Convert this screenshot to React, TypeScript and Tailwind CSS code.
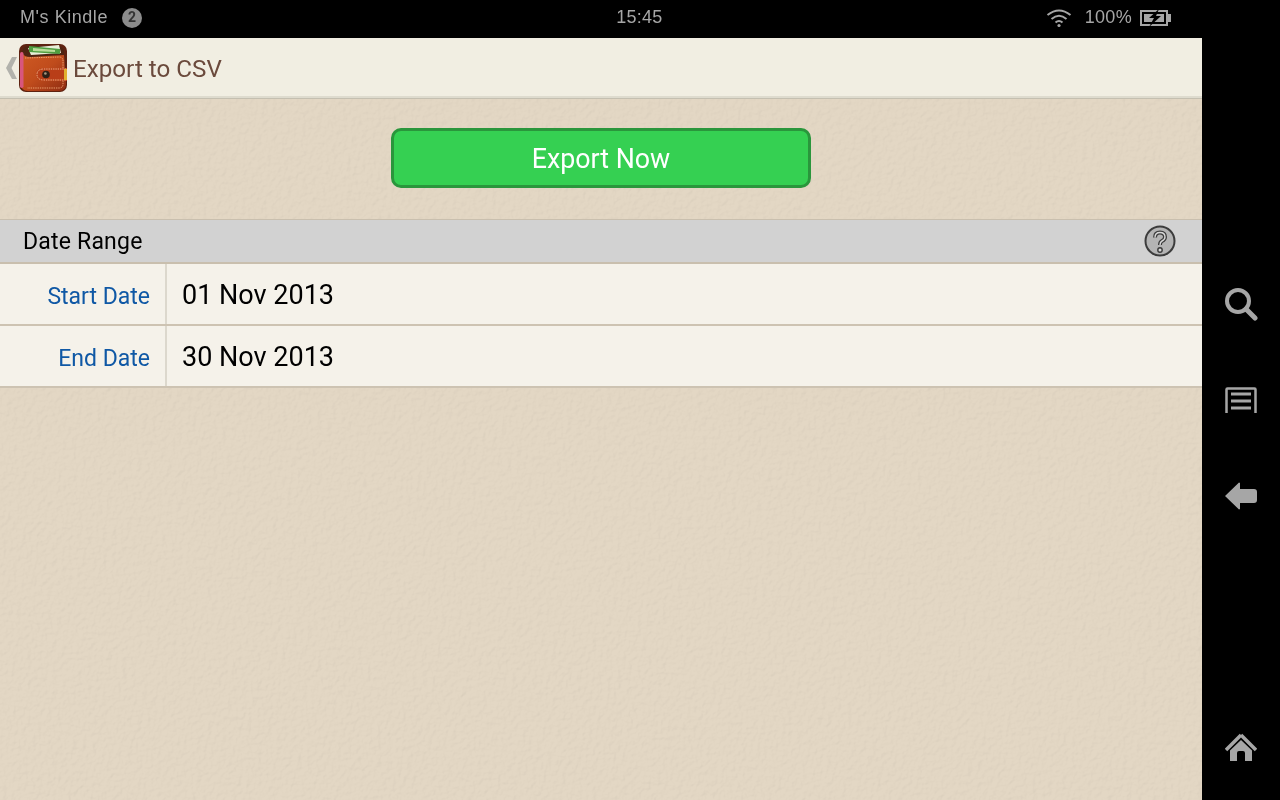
import React from "react";

function WalletIcon() {
  return (
    <svg width="48" height="48" viewBox="0 0 48 48" className="shrink-0">
      <defs>
        <linearGradient id="leather" x1="0" y1="0" x2="1" y2="1">
          <stop offset="0" stopColor="#cf5a24" />
          <stop offset="0.5" stopColor="#c04c1c" />
          <stop offset="1" stopColor="#8f2c12" />
        </linearGradient>
      </defs>
      <rect x="0" y="0" width="48" height="48" rx="7" fill="#5e2210" />
      <path d="M3 10 Q3 2 10 2 L38 2 Q45 2 45 9 L45 14 L3 14 Z" fill="#4e2412" />
      <path d="M9 4 L40 1 L42 9 L12 11 Z" fill="#e8efd8" />
      <path d="M10 2 L41 5 L41 10 L10 8 Z" fill="#4f9e40" />
      <path d="M14 4 L36 6 L36 8 L14 7 Z" fill="#b8dc98" />
      <path d="M3 8 Q4 13 12 13 L45 11 L47 40 Q47 47 40 47 L9 47 Q2 47 2 40 Z" fill="url(#leather)" />
      <rect x="1" y="8" width="3.500" height="36" rx="1.700" fill="#d8567e" />
      <path d="M6 14 L40 13 Q44 13 44 17 L44 40 Q44 44 40 44 L8 44" fill="none" stroke="#f0aa78" strokeWidth="0.900" strokeDasharray="1.400 0.900" />
      <path d="M48 24 L25 24 Q17 24 17 30.500 Q17 37 25 37 L48 37 Z" fill="#b93e18" />
      <path d="M47 25 L25 25 Q18 25 18 30.500 Q18 36 25 36 L47 36" fill="none" stroke="#f4c090" strokeWidth="0.900" strokeDasharray="1.400 0.900" />
      <rect x="45" y="25" width="3" height="11" fill="#e0b030" />
      <circle cx="27" cy="30.500" r="3.800" fill="#2e2018" />
      <circle cx="26.400" cy="29.500" r="1.300" fill="#a89880" />
    </svg>
  );
}

function PaperTexture() {
  return (
    <svg className="absolute inset-0 h-full w-full opacity-[0.13] mix-blend-multiply">
      <filter id="paper" x="0" y="0" width="100%" height="100%">
        <feTurbulence type="fractalNoise" baseFrequency="0.2" numOctaves="3" seed="4" result="noise" />
        <feDiffuseLighting in="noise" surfaceScale="1.600" diffuseConstant="1.050" lightingColor="#ffffff">
          <feDistantLight azimuth="225" elevation="62" />
        </feDiffuseLighting>
      </filter>
      <rect width="100%" height="100%" filter="url(#paper)" />
    </svg>
  );
}

function DateRow({ label, value }: { label: string; value: string }) {
  return (
    <div className="flex h-[62px] border-b-2 border-[#cdc3b2] bg-[#f5f2ea]">
      <div className="flex w-[167px] shrink-0 items-center justify-end border-r-2 border-[#dcd8cd] pr-[15px] pt-[7px] text-[23px] text-[#0f58a5]">
        {label}
      </div>
      <div className="flex flex-1 items-center pl-[15px] pt-[2px] text-[27px] text-black">{value}</div>
    </div>
  );
}

export default function App() {
  return (
    <div className="flex h-[800px] w-[1280px] overflow-hidden bg-black font-['Roboto',sans-serif]">
      <div className="flex w-[1202px] shrink-0 flex-col">
        {/* status bar */}
        <div className="relative flex h-[38px] shrink-0 items-center justify-between bg-black pb-[3px] text-[18px] text-[#a6a6a6]">
          <div className="flex items-center pl-[20px]">
            <span className="font-['Liberation_Sans',sans-serif] tracking-[0.55px]">M's Kindle</span>
            <span className="ml-[14px] flex h-[20px] w-[20px] items-center justify-center rounded-full bg-[#8c8c8c] text-[14px] font-bold text-[#333]">
              2
            </span>
          </div>
          <div className="pl-[91px] font-['Liberation_Sans',sans-serif] tracking-[0.2px]">15:45</div>
          <div className="flex items-center pr-[31px]">
            <svg width="26" height="20" viewBox="0 0 26 20" fill="none" stroke="#a6a6a6" strokeWidth="2">
              <path d="M1.500 7 Q13 -2 24.500 7" />
              <path d="M5.500 11 Q13 4.500 20.500 11" />
              <path d="M9.500 14.500 Q13 11.500 16.500 14.500" />
              <circle cx="13" cy="17.500" r="1.600" fill="#a6a6a6" stroke="none" />
            </svg>
            <span className="ml-[13px] font-['Liberation_Sans',sans-serif] tracking-[0.3px]">100%</span>
            <svg width="31" height="18" viewBox="0 0 31 18" className="ml-[8px]">
              <rect x="1" y="2" width="26" height="14" fill="none" stroke="#a6a6a6" strokeWidth="2" />
              <rect x="28" y="5" width="3" height="8" fill="#a6a6a6" />
              <rect x="4" y="5" width="20" height="8" fill="#a6a6a6" />
              <path d="M19 0 L9 9 H14 L9 18 L21 7 H16 L19 0 Z" fill="#000" />
            </svg>
          </div>
        </div>

        {/* title bar */}
        <div className="flex h-[58px] shrink-0 items-center bg-[#f1eee2] pt-[2px]">
          <svg width="14" height="24" viewBox="0 0 14 24" className="ml-[5px] shrink-0">
            <path d="M12 1 L7 1 L1 12 L7 23 L12 23 L6.500 12 Z" fill="#b2b2ac" />
          </svg>
          <WalletIcon />
          <span className="ml-[6px] pt-[3px] text-[24.200px] text-[#6b4a3c]">Export to CSV</span>
        </div>
        <div className="h-[3px] shrink-0 border-b border-[#c4bfb0] bg-[#dedbce]" />

        {/* page */}
        <div className="relative flex-1 bg-[#e3d7c4]">
          <PaperTexture />
          <div className="relative">
            <div className="flex justify-center pt-[29px]">
              <button
                type="button"
                className="h-[60px] w-[420px] rounded-[10px] border-[3px] border-[#2a963c] bg-[#35d052] pt-[2px] text-[26.800px] text-white"
              >
                Export Now
              </button>
            </div>
            <div className="mt-[31px]">
              <div className="flex h-[45px] items-center justify-between border-t border-b-2 border-[#c9bfae] bg-[#d2d2d2] pl-[23px] pr-[26.500px]">
                <span className="pt-[3px] text-[23px] tracking-[0.2px] text-black">Date Range</span>
                <svg width="32" height="32" viewBox="0 0 32 32">
                  <circle cx="16" cy="16" r="14.500" fill="#b4b4b4" stroke="#3c3c3c" strokeWidth="2" />
                  <path
                    d="M11 12.500 Q11 7.500 16 7.500 Q21 7.500 21 12 Q21 14.500 18 16 Q16 17 16 20"
                    fill="none"
                    stroke="#3c3c3c"
                    strokeWidth="4"
                  />
                  <path
                    d="M11 12.500 Q11 7.500 16 7.500 Q21 7.500 21 12 Q21 14.500 18 16 Q16 17 16 20"
                    fill="none"
                    stroke="#d8d8d8"
                    strokeWidth="1.400"
                  />
                  <circle cx="16" cy="25" r="2.200" fill="#d8d8d8" stroke="#3c3c3c" strokeWidth="1.400" />
                </svg>
              </div>
              <DateRow label="Start Date" value="01 Nov 2013" />
              <DateRow label="End Date" value="30 Nov 2013" />
            </div>
          </div>
        </div>
      </div>

      {/* system nav */}
      <div className="flex flex-1 flex-col items-center bg-black pt-[287px]">
        <svg width="34" height="34" viewBox="0 0 34 34" fill="none" stroke="#a6a6a6">
          <circle cx="14" cy="14" r="11" strokeWidth="4" />
          <path d="M22 22 L31 31" strokeWidth="5" strokeLinecap="round" />
        </svg>
        <svg width="32" height="26" viewBox="0 0 32 26" className="mt-[66px]" fill="none" stroke="#a6a6a6" strokeWidth="2.500">
          <path d="M1.500 26 V2.500 Q1.500 1.500 2.500 1.500 H29.500 Q30.500 1.500 30.500 2.500 V26" />
          <path d="M6 7 H26 M6 14 H26 M6 21 H26" strokeWidth="3" />
        </svg>
        <svg width="32" height="28" viewBox="0 0 32 28" className="mt-[69px]">
          <path
            d="M14 0.500 L15 1 V7 H29 Q32 7 32 10 V18 Q32 21 29 21 H15 V27 L14 27.500 L0 14 Z"
            fill="#a6a6a6"
          />
        </svg>
        <svg width="32" height="30" viewBox="0 0 32 30" className="mt-[222px]">
          <path d="M16 3 L1 18 M16 3 L31 18" fill="none" stroke="#a6a6a6" strokeWidth="3.500" />
          <path
            d="M16 8 L27 18.500 V29 H20 V21 Q20 19 18 19 H14 Q12 19 12 21 V29 H5 V18.500 Z"
            fill="#a6a6a6"
          />
        </svg>
      </div>
    </div>
  );
}
